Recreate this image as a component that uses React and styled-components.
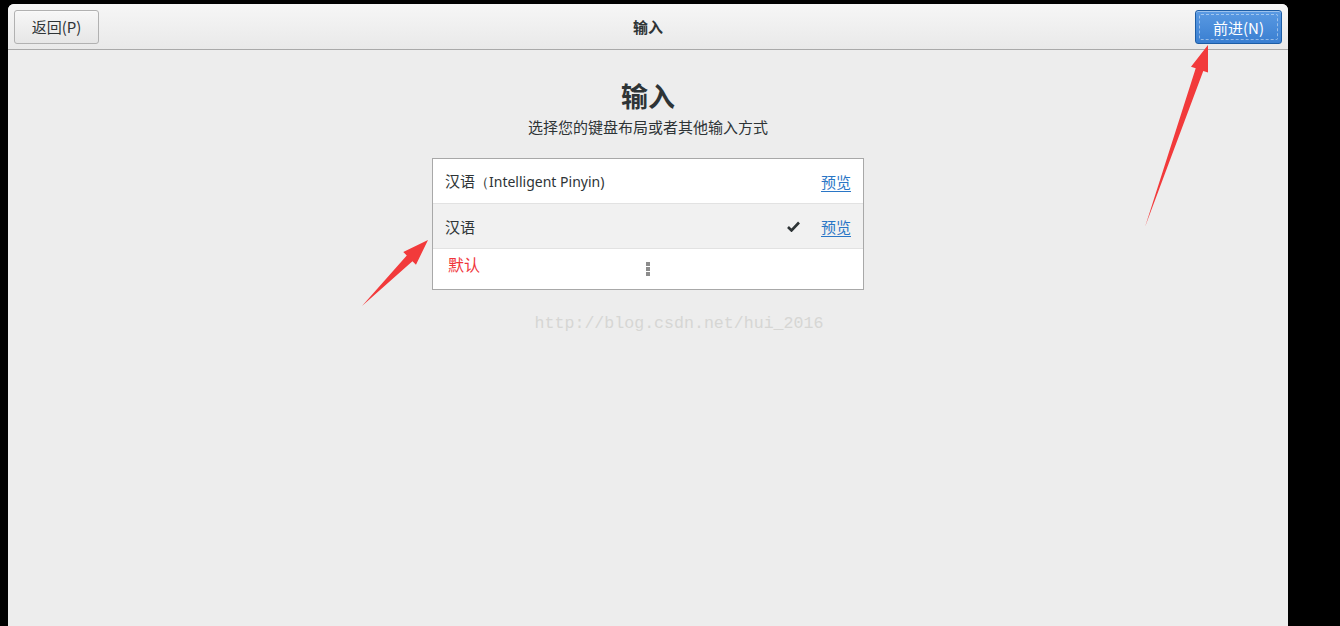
import React from "react";
import styled, { createGlobalStyle } from "styled-components";

const Global = createGlobalStyle`
  html, body { margin: 0; padding: 0; background: #000; height: 100%; overflow: hidden; }
  #root { height: 100%; }
  * { box-sizing: border-box; }
`;

const Screen = styled.div`
  position: relative;
  width: 1340px;
  height: 626px;
  background: #000;
  padding: 4px 52px 0 8px;
  display: flex;
`;

const Window = styled.div`
  flex: 1;
  display: flex;
  flex-direction: column;
  background: #ededed;
  border-radius: 6px 6px 0 0;
  overflow: hidden;
  font-family: "Noto Sans", "Noto Sans CJK SC", sans-serif;
  color: #2e3436;
`;

const HeaderBar = styled.div`
  height: 46px;
  flex: none;
  display: grid;
  grid-template-columns: 1fr auto 1fr;
  align-items: center;
  padding: 0 6px;
  background: linear-gradient(#f6f6f6, #e9e9e9);
  border-bottom: 1px solid #a9a9a9;
`;

const HeaderTitle = styled.div`
  font-family: "Noto Sans CJK SC", sans-serif;
  font-weight: 700;
  font-size: 15px;
  color: #2e3436;
`;

const Btn = styled.button`
  height: 34px;
  width: ${p => (p.$primary ? 87 : 85)}px;
  padding: 0;
  font-family: "Noto Sans CJK SC", "Noto Sans", sans-serif;
  font-size: 15px;
  border-radius: 3px;
  justify-self: ${p => (p.$primary ? "end" : "start")};
  margin-top: ${p => (p.$primary ? 1 : 0)}px;
  position: relative;
  cursor: pointer;
  color: ${p => (p.$primary ? "#fff" : "#2e3436")};
  border: 1px solid ${p => (p.$primary ? "#1d5da5" : "#b1b1b1")};
  background: ${p =>
    p.$primary
      ? "linear-gradient(#5a9ae3, #3a7fd1)"
      : "linear-gradient(#f7f7f7, #e6e6e6)"};
  box-shadow: inset 0 1px rgba(255,255,255,0.4);
  &::after {
    content: "";
    display: ${p => (p.$primary ? "block" : "none")};
    position: absolute;
    inset: 3px;
    border: 1px dashed rgba(255,255,255,0.45);
    border-radius: 2px;
  }
`;

const Content = styled.div`
  display: flex;
  flex-direction: column;
  align-items: center;
  padding-top: 28px;
`;

const Heading = styled.h1`
  margin: 0;
  font-family: "Noto Sans CJK SC", sans-serif;
  font-size: 27px;
  font-weight: 700;
  line-height: 36px;
  color: #2e3436;
`;

const Sub = styled.div`
  font-family: "Noto Sans CJK SC", sans-serif;
  font-size: 15px;
  line-height: 20px;
  margin-top: 3px;
  color: #2e3436;
`;

const List = styled.div`
  position: relative;
  width: 432px;
  margin-top: 21px;
  border: 1px solid #a8a8a8;
  background: #fff;
  display: flex;
  flex-direction: column;
`;

const Row = styled.div`
  height: ${p => p.$h || 45}px;
  display: flex;
  align-items: center;
  padding: 0 12px 0 12px;
  background: ${p => (p.$sel ? "#f1f1f1" : "#fff")};
  border-bottom: ${p => (p.$last ? "none" : "1px solid #e2e2e2")};
  font-size: 15px;
  color: #2e3436;
`;

const Label = styled.span`
  flex: 1;
  font-family: "Noto Sans CJK SC", sans-serif;
`;

const Latin = styled.span`
  font-family: "Noto Sans", sans-serif;
  font-size: 14px;
`;

const Check = styled.span`
  width: 14px;
  margin-right: 20px;
  display: flex;
  align-items: center;
`;

const Preview = styled.a`
  font-family: "Noto Sans CJK SC", sans-serif;
  color: #2a76c6;
  text-decoration: underline;
  text-underline-offset: 3px;
  font-size: 15px;
  cursor: pointer;
`;

const More = styled.div`
  flex: 1;
  display: flex;
  justify-content: center;
  align-items: center;
  margin-left: -12px;
  margin-right: -12px;
`;

const Dots = styled.div`
  display: flex;
  flex-direction: column;
  gap: 1px;
  & > i {
    display: block;
    width: 4px;
    height: 4px;
    background: #8c8c8c;
  }
`;

const Note = styled.span`
  position: absolute;
  left: 15px;
  top: 93px;
  font-family: "Noto Sans CJK SC", sans-serif;
  font-size: 16px;
  color: #f0353b;
`;

const Watermark = styled.div`
  margin-top: 24px;
  margin-left: 62px;
  font-family: "Liberation Mono", monospace;
  font-size: 16.6px;
  color: #d6d6d4;
`;

const Arrows = styled.svg`
  position: absolute;
  left: 0;
  top: 0;
  pointer-events: none;
`;

function Arrow({ x1, y1, x2, y2 }) {
  const dx = x2 - x1, dy = y2 - y1;
  const len = Math.hypot(dx, dy);
  const ux = dx / len, uy = dy / len;
  const px = -uy, py = ux;
  const headL = 26, headW = 9, neckW = 4;
  const bx = x2 - ux * headL, by = y2 - uy * headL;
  const pts = [
    [x1, y1],
    [bx + px * neckW, by + py * neckW],
    [bx + px * headW, by + py * headW],
    [x2, y2],
    [bx - px * headW, by - py * headW],
    [bx - px * neckW, by - py * neckW],
  ];
  return <polygon points={pts.map(p => p.join(",")).join(" ")} fill="#f23a3b" />;
}

export default function App() {
  return (
    <>
      <Global />
      <Screen>
        <Window>
          <HeaderBar>
            <Btn>返回(P)</Btn>
            <HeaderTitle>输入</HeaderTitle>
            <Btn $primary>前进(N)</Btn>
          </HeaderBar>
          <Content>
            <Heading>输入</Heading>
            <Sub>选择您的键盘布局或者其他输入方式</Sub>
            <List>
              <Row>
                <Label>汉语<Latin>（Intelligent Pinyin)</Latin></Label>
                <Preview>预览</Preview>
              </Row>
              <Row $sel>
                <Label>汉语</Label>
                <Check>
                  <svg width="13" height="11" viewBox="0 0 13 11">
                    <path d="M1 6 L4.5 9.5 L12 1.5" stroke="#2e3436" strokeWidth="2.6" fill="none" strokeLinejoin="miter" />
                  </svg>
                </Check>
                <Preview>预览</Preview>
              </Row>
              <Row $last $h={40}>
                <More>
                  <Dots><i /><i /><i /></Dots>
                </More>
              </Row>
              <Note>默认</Note>
            </List>
            <Watermark>http://blog.csdn.net/hui_2016</Watermark>
          </Content>
        </Window>
        <Arrows width="1340" height="626">
          <Arrow x1={362} y1={306} x2={428} y2={240} />
          <Arrow x1={1145} y1={227} x2={1208} y2={45} />
        </Arrows>
      </Screen>
    </>
  );
}
